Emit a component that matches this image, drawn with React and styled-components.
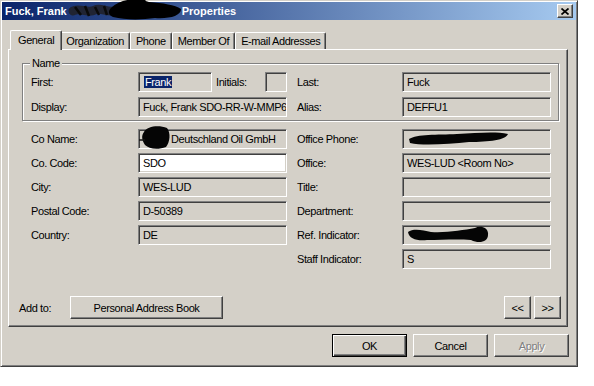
import React from 'react'
import styled, { createGlobalStyle } from 'styled-components'

const GlobalStyle = createGlobalStyle`
  html, body {
    margin: 0;
    background: #ffffff;
  }
  body {
    font-family: "Liberation Sans", Arial, sans-serif;
    font-size: 11px;
    letter-spacing: -0.4px;
    color: #000000;
  }
`

const Window = styled.div`
  box-sizing: border-box;
  width: 578px;
  height: 367px;
  display: flex;
  flex-direction: column;
  padding: 1px;
  background: #d4d0c8;
  border: 1px solid;
  border-color: #d4d0c8 #404040 #404040 #d4d0c8;
  box-shadow: inset 1px 1px #ffffff, inset -1px -1px #808080;
`

const TitleBar = styled.div`
  height: 18px;
  flex-shrink: 0;
  display: flex;
  align-items: center;
  padding: 0 3px 0 3px;
  background: linear-gradient(to right, #0a246a, #a6caf0);
  color: #ffffff;
  font-weight: bold;
  letter-spacing: 0;
  white-space: nowrap;

  svg.scribble {
    margin: 0 0 0 4px;
    overflow: visible;
  }
`

const CloseButton = styled.div`
  box-sizing: border-box;
  width: 16px;
  height: 14px;
  margin-left: auto;
  display: flex;
  align-items: center;
  justify-content: center;
  background: #d4d0c8;
  border: 1px solid;
  border-color: #ffffff #404040 #404040 #ffffff;
  box-shadow: inset -1px -1px #808080;
`

const Body = styled.div`
  flex: 1;
  display: flex;
  flex-direction: column;
  padding: 10px 7px 0 6px;
`

const TabStrip = styled.div`
  height: 19px;
  display: flex;
  align-items: flex-end;
  padding-left: 4px;
`

const Tab = styled.div`
  box-sizing: border-box;
  position: relative;
  z-index: ${p => (p.$active ? 1 : 0)};
  height: ${p => (p.$active ? '20px' : '17px')};
  margin: ${p => (p.$active ? '0 -2px -1px' : '0')};
  padding: 0 ${p => (p.$active ? '7px' : '5px')};
  padding-bottom: ${p => (p.$active ? '2px' : '0')};
  display: flex;
  align-items: center;
  white-space: nowrap;
  background: #d4d0c8;
  border: 1px solid;
  border-bottom: none;
  border-color: #ffffff #404040 #404040 #ffffff;
  border-radius: 2px 2px 0 0;
  box-shadow: inset -1px 0 #808080;
`

const Panel = styled.div`
  box-sizing: border-box;
  height: 278px;
  margin-right: 1px;
  display: flex;
  flex-direction: column;
  padding: 13px 6px 7px 0;
  border: 1px solid;
  border-color: #ffffff #404040 #404040 #ffffff;
  box-shadow: inset -1px -1px #808080;
`

const GroupBox = styled.div`
  position: relative;
  box-sizing: border-box;
  width: 537px;
  margin-left: 13px;
  padding: 8px 0 3px 8px;
  border: 1px solid #808080;
  box-shadow: inset 1px 1px #ffffff, 1px 1px #ffffff;
`

const Legend = styled.span`
  position: absolute;
  top: -7px;
  left: 7px;
  padding: 0 2px;
  background: #d4d0c8;
`

const FieldGrid = styled.div`
  display: grid;
  grid-template-columns: 107px 149px 10px 105px 149px;
  grid-auto-rows: 20px;
  row-gap: ${p => p.$gap}px;
  align-items: center;
  margin: ${p => p.$margin || '0'};
`

const Label = styled.span`
  white-space: nowrap;
  padding-left: ${p => p.$indent || 0}px;
`

const Field = styled.div`
  box-sizing: border-box;
  height: 20px;
  width: ${p => (p.$width ? `${p.$width}px` : 'auto')};
  flex-shrink: 0;
  display: flex;
  align-items: center;
  padding: 0 4px;
  background: ${p => (p.$editable ? '#ffffff' : '#d4d0c8')};
  border: 1px solid;
  border-color: #808080 #ffffff #ffffff #808080;
  box-shadow: inset 1px 1px #404040, inset -1px -1px #d4d0c8;
  white-space: nowrap;
  overflow: ${p => (p.$spill ? 'visible' : 'hidden')};
  padding-left: ${p => (p.$spill ? '0' : '4px')};
`

const Selected = styled.span`
  background: #0a246a;
  color: #ffffff;
  padding: 0 1px;
  margin-left: 1px;
`

const InlineRow = styled.div`
  display: flex;
  align-items: center;
`

const BottomRow = styled.div`
  margin-top: auto;
  display: flex;
  align-items: center;
  padding-left: 10px;
`

const AddLabel = styled.span`
  width: 51px;
`

const Button = styled.div`
  box-sizing: border-box;
  width: ${p => p.$width}px;
  height: 23px;
  display: flex;
  align-items: center;
  justify-content: center;
  white-space: nowrap;
  background: #d4d0c8;
  color: ${p => (p.$disabled ? '#808080' : '#000000')};
  text-shadow: ${p => (p.$disabled ? '1px 1px #ffffff' : 'none')};
  border: 1px solid;
  border-color: ${p => (p.$default ? '#000000' : '#ffffff #404040 #404040 #ffffff')};
  box-shadow: ${p =>
    p.$default
      ? 'inset 1px 1px #ffffff, inset -1px -1px #404040, inset -2px -2px #808080'
      : 'inset -1px -1px #808080'};
`

const NavButtons = styled.div`
  margin-left: auto;
  display: flex;
  gap: 3px;
`

const Footer = styled.div`
  margin-top: 7px;
  display: flex;
  justify-content: flex-end;
  gap: 6px;
`

const Scribble = ({ width, height, d, line, style }) => (
  <svg style={style} width={width} height={height} viewBox={`0 0 ${width} ${height}`}>
    <path d={d} fill="#050505" />
    {line && <path d={line} stroke="#151515" strokeWidth="1.5" fill="none" />}
  </svg>
)

const TitleScribble = () => (
  <svg className="scribble" width="111" height="18" viewBox="0 0 111 18">
    <path d="M2 9 C 8 5, 16 12, 24 8 C 30 5, 38 12, 46 8" stroke="#202433" strokeWidth="9" fill="none" strokeLinecap="round" />
    <path d="M4 5 L 10 13 M14 4 L 18 14 M24 5 L 28 13 M33 4 L 36 13" stroke="#0a0a0a" strokeWidth="2.5" fill="none" />
    <path d="M40 6 C 50 -4, 66 -4, 78 0 C 92 1, 104 3, 110 7 C 110 14, 98 17, 84 16 C 70 18, 54 18, 42 15 C 37 13, 37 9, 40 6 Z" fill="#000000" />
    <path d="M56 3 C 60 -5, 70 -5, 74 -1" stroke="#000000" strokeWidth="5" fill="none" />
  </svg>
)

const leftRows = [
  { label: 'Co Name:', value: 'Deutschland Oil GmbH', blob: 'coname' },
  { label: 'Co. Code:', value: 'SDO', editable: true },
  { label: 'City:', value: 'WES-LUD' },
  { label: 'Postal Code:', value: 'D-50389' },
  { label: 'Country:', value: 'DE' },
  null
]

const rightRows = [
  { label: 'Office Phone:', blob: 'phone' },
  { label: 'Office:', value: 'WES-LUD <Room No>' },
  { label: 'Title:', value: '' },
  { label: 'Department:', value: '' },
  { label: 'Ref. Indicator:', blob: 'ref' },
  { label: 'Staff Indicator:', value: 'S' }
]

const blobs = {
  coname: (
    <Scribble
      width={32}
      height={22}
      style={{ marginTop: -3, overflow: 'visible' }}
      d="M5 5 C 8 -1, 20 -2, 28 1 C 32 6, 31 15, 27 20 C 19 23, 10 22, 6 18 C 3 13, 2 9, 5 5 Z"
      line="M0 13 L6 13"
    />
  ),
  phone: (
    <Scribble
      width={102}
      height={16}
      d="M2 8 C 10 3, 30 4, 50 3 C 70 2, 88 0, 101 3 C 99 9, 82 11, 62 11 C 42 13, 16 15, 3 12 Z"
    />
  ),
  ref: (
    <Scribble
      width={82}
      height={18}
      d="M1 6 C 6 2, 16 4, 24 6 C 40 7, 56 4, 68 2 C 74 -1, 82 2, 81 9 C 81 16, 72 18, 64 14 C 50 13, 34 14, 20 14 C 10 15, 2 13, 1 6 Z"
    />
  )
}

function renderCell(row, side) {
  if (!row) return [<span key={`${side}-l`} />, <span key={`${side}-f`} />]
  return [
    <Label key={`${side}-l`}>{row.label}</Label>,
    <Field key={`${side}-f`} $editable={row.editable} $spill={row.blob === 'coname'}>
      {row.blob && blobs[row.blob]}
      {row.value}
    </Field>
  ]
}

export default function App() {
  return (
    <>
      <GlobalStyle />
      <Window>
        <TitleBar>
          <span>Fuck, Frank</span>
          <TitleScribble />
          <span>Properties</span>
          <CloseButton>
            <svg width="8" height="7" viewBox="0 0 8 7">
              <path d="M0.5 0.5 L7.5 6.5 M7.5 0.5 L0.5 6.5" stroke="#000" strokeWidth="1.7" />
            </svg>
          </CloseButton>
        </TitleBar>
        <Body>
          <TabStrip>
            <Tab $active>General</Tab>
            <Tab>Organization</Tab>
            <Tab>Phone</Tab>
            <Tab>Member Of</Tab>
            <Tab>E-mail Addresses</Tab>
          </TabStrip>
          <Panel>
            <GroupBox>
              <Legend>Name</Legend>
              <FieldGrid $gap={5}>
                <Label>First:</Label>
                <InlineRow>
                  <Field $width={74}>
                    <Selected>Frank</Selected>
                  </Field>
                  <Label $indent={4} style={{ width: 49 }}>Initials:</Label>
                  <Field $width={22} />
                </InlineRow>
                <span />
                <Label>Last:</Label>
                <Field>Fuck</Field>
                <Label>Display:</Label>
                <Field>Fuck, Frank SDO-RR-W-MMP6</Field>
                <span />
                <Label>Alias:</Label>
                <Field>DEFFU1</Field>
              </FieldGrid>
            </GroupBox>
            <FieldGrid $gap={4} $margin="8px 0 0 22px">
              {leftRows.map((row, i) => [
                ...renderCell(row, `l${i}`),
                <span key={`g${i}`} />,
                ...renderCell(rightRows[i], `r${i}`)
              ])}
            </FieldGrid>
            <BottomRow>
              <AddLabel>Add to:</AddLabel>
              <Button $width={153}>Personal Address Book</Button>
              <NavButtons>
                <Button $width={27}>&lt;&lt;</Button>
                <Button $width={27}>&gt;&gt;</Button>
              </NavButtons>
            </BottomRow>
          </Panel>
          <Footer>
            <Button $width={75} $default>OK</Button>
            <Button $width={75}>Cancel</Button>
            <Button $width={75} $disabled>Apply</Button>
          </Footer>
        </Body>
      </Window>
    </>
  )
}
